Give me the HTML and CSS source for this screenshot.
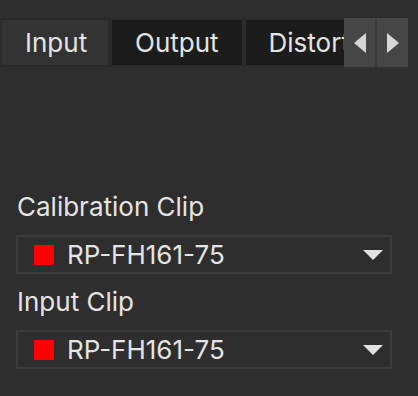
FILE: index.html
```html
<!DOCTYPE html>
<html>
<head>
<meta charset="utf-8">
<link rel="stylesheet" href="styles.css">
</head>
<body>
<div class="tabbar">
  <div class="tabs">
    <div class="tab active">Input</div>
    <div class="tab">Output</div>
    <div class="tab">Distortion</div>
  </div>
  <div class="scroll-btns">
    <div class="sbtn"><span class="tri-left"></span></div>
    <div class="sbtn"><span class="tri-right"></span></div>
  </div>
</div>
<div class="content">
  <div class="field">
    <div class="label">Calibration Clip</div>
    <div class="select">
      <span class="swatch"></span>
      <span class="value">RP-FH161-75</span>
      <span class="caret"></span>
    </div>
  </div>
  <div class="field">
    <div class="label">Input Clip</div>
    <div class="select">
      <span class="swatch"></span>
      <span class="value">RP-FH161-75</span>
      <span class="caret"></span>
    </div>
  </div>
</div>
</body>
</html>
```

FILE: styles.css
```css
html, body {
  margin: 0;
  padding: 0;
}
body {
  background: #2e2e2e;
  width: 418px;
  height: 396px;
  overflow: hidden;
  font-family: Inter, "Liberation Sans", sans-serif;
  color: #e4e4e4;
}
.tabbar {
  margin-top: 18px;
  height: 49px;
  width: 408px;
  background: #2a2a2a;
  display: flex;
  padding-left: 2px;
  box-sizing: border-box;
}
.tabs {
  flex: 1;
  display: flex;
  gap: 4px;
  overflow: hidden;
  padding-top: 2px;
  padding-bottom: 2px;
}
.tab {
  flex: none;
  background: #1c1c1c;
  padding: 0 23px;
  font-size: 26px;
  line-height: 45px;
  white-space: nowrap;
}
.tab.active {
  background: #333333;
  width: 106px;
  box-sizing: border-box;
}
.scroll-btns {
  display: flex;
  flex: none;
  width: 64px;
}
.sbtn {
  flex: 1;
  background: #464646;
  display: flex;
  align-items: center;
  justify-content: center;
}
.sbtn:first-child {
  border-right: 2px solid #3a3a3a;
}
.tri-left {
  width: 0;
  height: 0;
  border-top: 10px solid transparent;
  border-bottom: 10px solid transparent;
  border-right: 12px solid #d6d6d6;
}
.tri-right {
  width: 0;
  height: 0;
  border-top: 10px solid transparent;
  border-bottom: 10px solid transparent;
  border-left: 12px solid #d6d6d6;
}
.content {
  padding: 126px 26px 0 16px;
}
.field {
  margin-bottom: 14px;
}
.label {
  font-size: 26px;
  line-height: 28px;
  padding-left: 1px;
  margin-bottom: 14px;
}
.select {
  height: 39px;
  border: 2px solid #3c3c3c;
  box-sizing: border-box;
  display: flex;
  align-items: center;
  padding: 0 7px 0 16px;
}
.swatch {
  width: 20px;
  height: 20px;
  background: #ff0000;
  flex: none;
}
.value {
  flex: 1;
  margin-left: 13px;
  font-size: 26px;
  line-height: 30px;
}
.caret {
  width: 0;
  height: 0;
  border-left: 10px solid transparent;
  border-right: 10px solid transparent;
  border-top: 10px solid #e2e2e2;
}
```
